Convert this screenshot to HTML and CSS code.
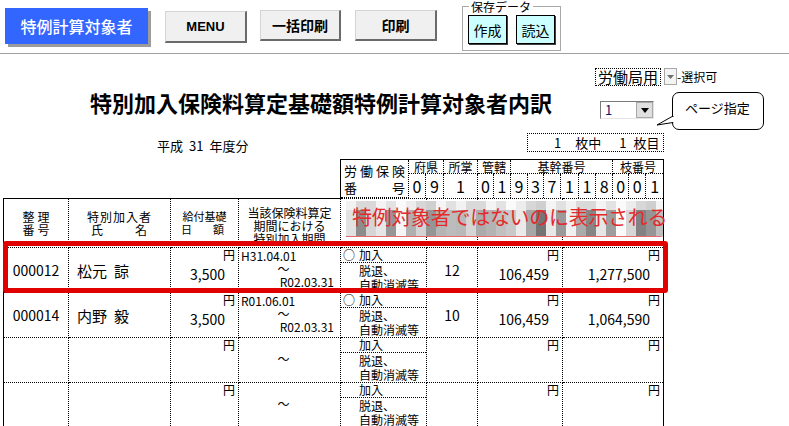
FILE: index.html
```html
<!DOCTYPE html>
<html lang="ja">
<head>
    <meta charset="UTF-8">
    <meta name="viewport" content="width=device-width, initial-scale=1.0">
    <title>特別加入保険料算定基礎額特例計算対象者内訳</title>
    <link rel="stylesheet" href="styles.css">
</head>
<body>
    <div class="toolbar">
        <button class="btn-main">特例計算対象者</button>
        <button class="btn btn-menu">MENU</button>
        <button class="btn btn-bulk">一括印刷</button>
        <button class="btn btn-print">印刷</button>
        <fieldset class="save-group">
            <legend>保存データ</legend>
            <button class="btn-save">作成</button>
            <button class="btn-save">読込</button>
        </fieldset>
    </div>

    <div class="sheet">
        <div class="office-row">
            <span class="office-box">労働局用</span>
            <span class="mini-drop"><svg width="7" height="4" viewBox="0 0 7 4"><polygon points="0,0 7,0 3.5,4" fill="#6e6e6e"/></svg></span>
            <span class="office-note">-選択可</span>
        </div>

        <div class="title-row">
            <h1>特別加入保険料算定基礎額特例計算対象者内訳</h1>
            <div class="page-sel">
                <span class="page-val">1</span>
                <span class="page-btn"><svg width="8" height="5" viewBox="0 0 8 5"><polygon points="0,0 8,0 4,5" fill="#000"/></svg></span>
            </div>
        </div>

        <div class="year-row">
            <div class="year"><span>平成</span><span>31</span><span>年度分</span></div>
            <div class="sheet-count"><span class="n1">1</span><span class="t1">枚中</span><span class="n2">1</span><span class="t2">枚目</span></div>
        </div>

        <table class="insno">
            <colgroup>
                <col style="width:68px"><col style="width:17px"><col style="width:18px"><col style="width:34px">
                <col style="width:16px"><col style="width:17px"><col style="width:17px"><col style="width:16px">
                <col style="width:17px"><col style="width:18px"><col style="width:17px"><col style="width:17px">
                <col style="width:16px"><col style="width:17px"><col style="width:18px">
            </colgroup>
            <tr class="labels">
                <td rowspan="2" class="ins-label">
                    <div class="spread"><span>労</span><span>働</span><span>保</span><span>険</span></div>
                    <div class="spread"><span>番</span><span>号</span></div>
                </td>
                <td colspan="2">府県</td>
                <td>所掌</td>
                <td colspan="2">管轄</td>
                <td colspan="6">基幹番号</td>
                <td colspan="3">枝番号</td>
            </tr>
            <tr class="digits">
                <td>0</td><td>9</td><td>1</td><td>0</td><td>1</td><td>9</td><td>3</td>
                <td>7</td><td>1</td><td>1</td><td>8</td><td>0</td><td>0</td><td>1</td>
            </tr>
        </table>

        <table class="grid">
            <colgroup>
                <col style="width:65px"><col style="width:102px"><col style="width:68px"><col style="width:102px">
                <col style="width:86px"><col style="width:51px"><col style="width:85px"><col style="width:101px">
            </colgroup>
            <thead>
                <tr>
                    <th class="h-no">整理<br>番号</th>
                    <th class="h-name">特別加入者<div class="spread"><span>氏</span><span>名</span></div></th>
                    <th class="h-day">給付基礎<div class="spread"><span>日</span><span>額</span></div></th>
                    <th class="h-term">当該保険料算定<br>期間における<br>特別加入期間</th>
                    <th class="hid"></th><th class="hid"></th><th class="hid"></th><th class="hid"></th>
                </tr>
            </thead>
            <tbody>
                <tr>
                    <td class="no">000012</td>
                    <td class="name"><span>松元</span><span>諒</span></td>
                    <td class="amt"><div class="yen">円</div><div class="val">3,500</div></td>
                    <td class="term"><div class="from">H31.04.01</div><div class="tilde">〜</div><div class="to">R02.03.31</div></td>
                    <td class="kind"><div class="join"><span class="mark">○</span>加入</div><div class="leave">脱退、<br>自動消滅等</div></td>
                    <td class="mon">12</td>
                    <td class="amt"><div class="yen">円</div><div class="val">106,459</div></td>
                    <td class="amt"><div class="yen">円</div><div class="val">1,277,500</div></td>
                </tr>
                <tr>
                    <td class="no">000014</td>
                    <td class="name"><span>内野</span><span>毅</span></td>
                    <td class="amt"><div class="yen">円</div><div class="val">3,500</div></td>
                    <td class="term"><div class="from">R01.06.01</div><div class="tilde">〜</div><div class="to">R02.03.31</div></td>
                    <td class="kind"><div class="join"><span class="mark">○</span>加入</div><div class="leave">脱退、<br>自動消滅等</div></td>
                    <td class="mon">10</td>
                    <td class="amt"><div class="yen">円</div><div class="val">106,459</div></td>
                    <td class="amt"><div class="yen">円</div><div class="val">1,064,590</div></td>
                </tr>
                <tr>
                    <td></td>
                    <td></td>
                    <td class="amt"><div class="yen">円</div></td>
                    <td class="term"><div class="from">&nbsp;</div><div class="tilde">〜</div></td>
                    <td class="kind"><div class="join"><span class="mark"></span>加入</div><div class="leave">脱退、<br>自動消滅等</div></td>
                    <td></td>
                    <td class="amt"><div class="yen">円</div></td>
                    <td class="amt"><div class="yen">円</div></td>
                </tr>
                <tr>
                    <td></td>
                    <td></td>
                    <td class="amt"><div class="yen">円</div></td>
                    <td class="term"><div class="from">&nbsp;</div><div class="tilde">〜</div></td>
                    <td class="kind"><div class="join"><span class="mark"></span>加入</div><div class="leave">脱退、<br>自動消滅等</div></td>
                    <td></td>
                    <td class="amt"><div class="yen">円</div></td>
                    <td class="amt"><div class="yen">円</div></td>
                </tr>
            </tbody>
        </table>

        <!-- annotations laid over the sheet -->
        <div class="callout">ページ指定
            <svg class="callout-tail" width="18" height="14" viewBox="0 0 18 14">
                <polygon points="17,2 1,11 17,8.5" fill="#fff" stroke="#000" stroke-width="1"/>
                <rect x="16" y="3" width="3" height="5" fill="#fff"/>
            </svg>
        </div>
        <div class="mosaic"></div>
        <div class="note">特例対象者ではないのに表示される</div>
        <div class="note-line"></div>
        <div class="mark-box"></div>
    </div>
</body>
</html>
```

FILE: styles.css
```css
* {
    margin: 0;
    padding: 0;
    box-sizing: border-box;
}

body {
    font-family: "Noto Sans CJK JP", "Noto Sans", sans-serif;
    color: #000;
    background: #fff;
    width: 789px;
    height: 426px;
    overflow: hidden;
}

/* toolbar */
.toolbar {
    display: flex;
    align-items: flex-start;
    height: 54px;
    padding-left: 5px;
    border-bottom: 1px solid #a0a0a0;
}

button {
    font-family: inherit;
    cursor: pointer;
}

.btn-main {
    margin-top: 8px;
    width: 143px;
    height: 36px;
    background: #3366ff;
    color: #fff;
    border: none;
    font-size: 16px;
    font-weight: 500;
    box-shadow: 3px 3px 0 #9c9c9c;
}

.btn {
    background: #f0f0f0;
    border-top: 1px solid #d4d4d4;
    border-left: 1px solid #d4d4d4;
    border-right: 2px solid #6a6a6a;
    border-bottom: 2px solid #6a6a6a;
    font-size: 14px;
    font-weight: 700;
    height: 31px;
}

.btn-menu {
    margin: 11px 0 0 17px;
    width: 82px;
    height: 32px;
    font-family: "Liberation Sans", sans-serif;
    font-size: 13px;
}

.btn-bulk {
    margin: 10px 0 0 13px;
    width: 81px;
}

.btn-print {
    margin: 10px 0 0 14px;
    width: 82px;
}

.save-group {
    margin-left: 25px;
    width: 98px;
    height: 51px;
    border: 1px solid #a8a8a8;
    padding: 2px 5px 5px 5px;
    display: flex;
    gap: 9px;
}

.save-group legend {
    font-size: 12px;
    line-height: 13px;
    padding: 0 2px;
    margin-left: 1px;
}

.btn-save {
    width: 39px;
    height: 29px;
    background: #ccffff;
    border: 1px solid #000;
    box-shadow: 1px 1px 0 #404040;
    font-size: 14px;
}

/* sheet */
.sheet {
    position: relative;
    padding-top: 14px;
}

.office-row {
    display: flex;
    align-items: flex-start;
    height: 18px;
    padding-left: 595px;
}

.office-box {
    width: 66px;
    height: 18px;
    border: 1px dotted #000;
    font-size: 15px;
    line-height: 16px;
    padding-left: 2px;
}

.mini-drop {
    display: flex;
    align-items: center;
    justify-content: center;
    margin-left: 3px;
    width: 13px;
    height: 17px;
    background: #f4f4f4;
    border: 1px solid #a8a8a8;
}

.office-note {
    font-size: 12px;
    line-height: 18px;
}

.title-row {
    display: flex;
    align-items: flex-start;
    height: 47px;
}

.title-row h1 {
    flex: none;
    width: 470px;
    margin: 3px 0 0 90px;
    font-size: 22px;
    line-height: 26px;
    font-weight: 700;
}

.page-sel {
    display: flex;
    margin: 15px 0 0 40px;
    width: 54px;
    height: 18px;
    background: #fff;
    border-top: 1px solid #7a7a7a;
    border-left: 1px solid #7a7a7a;
    border-right: 1px solid #e4e4e4;
    border-bottom: 1px solid #e4e4e4;
}

.page-val {
    flex: 1;
    padding-left: 4px;
    font-size: 13px;
    line-height: 16px;
    color: #0a1a70;
}

.page-btn {
    display: flex;
    align-items: center;
    justify-content: center;
    width: 17px;
    background: #e0e0e0;
    border: 1px solid #a8a8a8;
}

.year-row {
    display: flex;
    justify-content: space-between;
    width: 664px;
    height: 26px;
}

.year {
    display: flex;
    gap: 6px;
    padding-left: 157px;
    margin-top: 5px;
    font-size: 13px;
    line-height: 16px;
}

.sheet-count {
    display: flex;
    width: 137px;
    height: 19px;
    border: 1px dotted #000;
    font-size: 13px;
    line-height: 17px;
    white-space: nowrap;
}

.sheet-count span { flex: none; }
.sheet-count .n1 { margin-left: 26px; }
.sheet-count .t1 { margin-left: 14px; }
.sheet-count .n2 { margin-left: 18px; }
.sheet-count .t2 { margin-left: 7px; }

.spread {
    display: flex;
    justify-content: space-between;
}

/* labour insurance number */
.insno {
    margin-left: 340px;
    width: 324px;
    border-collapse: collapse;
    table-layout: fixed;
    border: 1px solid #000;
    border-bottom: none;
}

.insno td {
    border: 1px dotted #000;
    padding: 0;
    text-align: center;
}

.insno .labels td {
    height: 14px;
    font-size: 12px;
    line-height: 12px;
}

.insno .digits td {
    height: 24px;
    font-size: 16px;
    line-height: 20px;
    border-bottom: none;
}

.insno .labels .ins-label {
    padding: 1px 3px 0 3px;
    font-size: 13px;
    line-height: 17px;
    border-left: 1px solid #000;
    vertical-align: middle;
}

/* main grid */
.grid {
    margin-left: 3px;
    width: 661px;
    border-collapse: collapse;
    table-layout: fixed;
    border-left: 1px solid #000;
    border-right: 1px solid #000;
}

.grid th,
.grid td {
    border: 1px dotted #000;
    padding: 0;
    vertical-align: top;
    font-weight: 400;
}

.grid thead th {
    height: 49px;
    vertical-align: middle;
    text-align: center;
    border-top: 1px solid #000;
}

.grid thead th.hid {
    border-top-style: dotted;
}

.h-no {
    font-size: 12px;
    line-height: 13px;
    letter-spacing: 3px;
    padding-left: 3px !important;
}

.h-name {
    font-size: 12px;
    line-height: 13px;
    letter-spacing: 1px;
}

.h-name .spread {
    padding: 0 22px 0 22px;
}

.h-day {
    font-size: 11px;
    line-height: 13px;
}

.h-day .spread {
    padding: 0 14px 0 10px;
}

.h-term {
    font-size: 12px;
    line-height: 13px;
    padding-top: 4px !important;
}

.grid tbody td {
    height: 45px;
}

.no {
    vertical-align: middle !important;
    text-align: center;
    font-size: 14px;
}

.name {
    vertical-align: middle !important;
    padding-left: 8px !important;
    font-size: 15px;
}

.name span + span {
    margin-left: 7px;
}

.amt .yen {
    text-align: right;
    padding-right: 3px;
    font-size: 12px;
    line-height: 13px;
}

.amt .val {
    text-align: right;
    padding-right: 13px;
    margin-top: 6px;
    font-size: 14px;
    line-height: 14px;
}

.term {
    font-size: 12px;
    line-height: 13px;
    padding-top: 1px !important;
}

.term .from {
    padding-left: 2px;
}

.term .tilde {
    text-align: center;
    padding-right: 12px;
}

.term .to {
    text-align: right;
    padding-right: 6px;
}

.kind {
    font-size: 12px;
    line-height: 14px;
}

.kind .join {
    height: 15px;
    border-bottom: 1px dotted #000;
}

.kind .mark {
    display: inline-block;
    width: 18px;
    padding-left: 2px;
}

.kind .leave {
    padding-left: 18px;
    padding-top: 1px;
}

.mon {
    vertical-align: middle !important;
    text-align: center;
    font-size: 14px;
}

/* annotations */
.callout {
    position: absolute;
    left: 672px;
    top: 38px;
    width: 92px;
    height: 38px;
    border: 1px solid #000;
    border-radius: 7px;
    background: #fff;
    font-size: 13px;
    line-height: 30px;
    padding-left: 12px;
}

.callout-tail {
    position: absolute;
    left: -17px;
    top: 21px;
}

.mosaic {
    position: absolute;
    left: 346px;
    top: 147px;
    width: 317px;
    height: 36px;
    background-color: #d6d6d6;
    background-image:
        linear-gradient(to bottom, rgba(255,255,255,.55) 0 9px, transparent 9px),
        repeating-linear-gradient(90deg,
            transparent 0 10px,
            rgba(0,0,0,.18) 10px 20px,
            rgba(255,255,255,.5) 20px 30px,
            transparent 30px 40px,
            rgba(0,0,0,.22) 40px 50px),
        repeating-linear-gradient(90deg,
            rgba(255,255,255,.3) 0 10px,
            rgba(0,0,0,.2) 10px 30px,
            rgba(255,255,255,.4) 30px 40px,
            rgba(0,0,0,.1) 40px 50px,
            rgba(255,255,255,.75) 50px 60px,
            transparent 60px 70px,
            rgba(0,0,0,.22) 70px 80px,
            rgba(0,0,0,.3) 80px 90px,
            rgba(255,255,255,.45) 90px 100px,
            rgba(0,0,0,.12) 100px 110px);
    background-size: 100% 100%, 100% 27px, 100% 100%;
    background-position: 0 0, 0 9px, 0 0;
    background-repeat: no-repeat;
}

.note {
    position: absolute;
    left: 352px;
    top: 151px;
    font-size: 20px;
    line-height: 24px;
    letter-spacing: -0.3px;
    color: #e42a2a;
    white-space: nowrap;
}

.note-line {
    position: absolute;
    left: 346px;
    top: 182px;
    width: 315px;
    height: 1px;
    background: #e86a6a;
}

.mark-box {
    position: absolute;
    left: 3px;
    top: 187px;
    width: 665px;
    height: 52px;
    border: 5px solid #e00000;
    border-radius: 3px;
}
```
